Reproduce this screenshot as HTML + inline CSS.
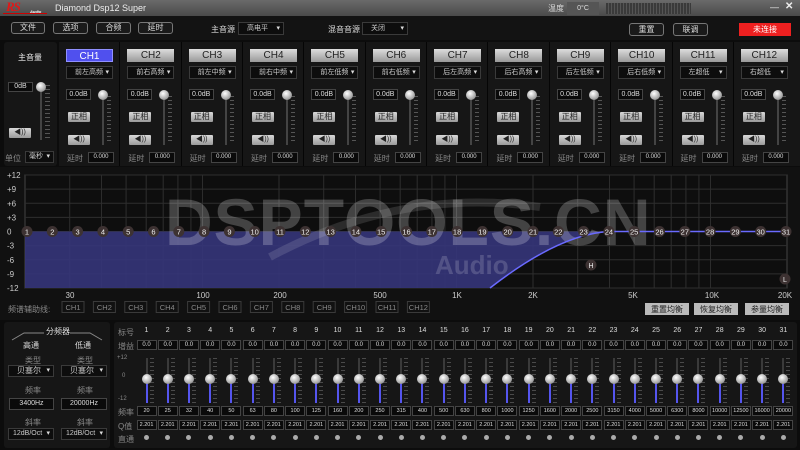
<!DOCTYPE html>
<html><head><meta charset="utf-8">
<style>
*{box-sizing:border-box;margin:0;padding:0}
body{width:800px;height:450px;overflow:hidden;background:#0c0c0c;font-family:"Liberation Sans","Noto Sans CJK SC",sans-serif;color:#ddd;position:relative;font-size:8px}
.a{position:absolute}
.btn{position:absolute;border:1px solid #777;border-radius:3px;background:#1a1a1a;color:#ddd;text-align:center;font-size:8px}
.box{position:absolute;border:1px solid #444;background:#0a0a0a;color:#ddd;text-align:center;font-size:7px}
.gbtn{position:absolute;background:linear-gradient(#d8d8d8,#9a9a9a);color:#222;text-align:center;border-radius:1px}
.sel{position:absolute;border:1px solid #3a3a3a;background:#0d0d0d;color:#ccc;font-size:7px;text-align:center}
.sel:after{content:"▾";position:absolute;right:3px;top:0;font-size:7px;color:#ddd}
.knob{position:absolute;width:10px;height:10px;border-radius:50%;background:radial-gradient(circle at 40% 35%,#fff,#aaa 60%,#666)}
.lbl{position:absolute;color:#888;font-size:8px}
</style></head><body>
<!-- title bar -->
<div class="a" style="left:0;top:0;width:800px;height:16px;background:linear-gradient(#6a6a6a,#4a4a4a)"></div>
<div class="a" style="left:6px;top:0px;color:#e01818;font:italic bold 13px 'Liberation Serif',serif;letter-spacing:-1px;line-height:13px">RS</div>
<div class="a" style="left:30px;top:9px;color:#fff;font:italic bold 4px 'Liberation Sans',sans-serif">Audio</div>
<div class="a" style="left:3px;top:13px;width:44px;height:1px;background:#c00"></div>
<div class="a" style="left:55px;top:3px;color:#eee;font-size:9px">Diamond Dsp12 Super</div>
<div class="a" style="left:548px;top:3px;color:#ddd;font-size:8px">温度</div>
<div class="a" style="left:567px;top:2px;width:32px;height:13px;background:#555;color:#ddd;font-size:7px;text-align:center;line-height:13px">0°C</div>
<div class="a" style="left:606px;top:3px;width:85px;height:11px;background:repeating-linear-gradient(90deg,#3a3a3a 0 2px,#555 2px 3px)"></div>
<div class="a" style="left:770px;top:2px;color:#eee;font-size:9px">—</div>
<div class="a" style="left:785px;top:1px;color:#eee;font-size:10px;font-weight:bold">✕</div>
<!-- menu row -->
<div class="a" style="left:0;top:16px;width:800px;height:24px;background:#131313"></div>
<div class="btn" style="left:11px;top:22px;width:34px;height:12px;line-height:10px">文件</div>
<div class="btn" style="left:53px;top:22px;width:35px;height:12px;line-height:10px">选项</div>
<div class="btn" style="left:96px;top:22px;width:35px;height:12px;line-height:10px">合频</div>
<div class="btn" style="left:138px;top:22px;width:35px;height:12px;line-height:10px">延时</div>
<div class="a" style="left:211px;top:24px;font-size:8px">主音源</div>
<div class="sel" style="left:238px;top:22px;width:46px;height:13px;line-height:11px;text-align:left;padding-left:8px">高电平</div>
<div class="a" style="left:328px;top:24px;font-size:8px">混音音源</div>
<div class="sel" style="left:362px;top:22px;width:46px;height:13px;line-height:11px;text-align:left;padding-left:8px">关闭</div>
<div class="btn" style="left:629px;top:23px;width:35px;height:13px;line-height:11px">重置</div>
<div class="btn" style="left:673px;top:23px;width:35px;height:13px;line-height:11px">联调</div>
<div class="a" style="left:739px;top:23px;width:52px;height:13px;background:#ee2020;color:#fff;text-align:center;line-height:13px;font-size:8px">未连接</div>
<!-- master -->
<div class="a" style="left:4px;top:42px;width:53px;height:124px;background:#161616;border-radius:3px"></div>
<div class="a" style="left:18px;top:52px;font-size:8px;color:#eee">主音量</div>
<div class="box" style="left:8px;top:82px;width:25px;height:10px;font-size:7px;line-height:8px">0dB</div>
<div class="a" style="left:40px;top:85px;width:2px;height:55px;background:#444"></div>
<div class="a" style="left:45px;top:85px;width:5px;height:55px;background:repeating-linear-gradient(#555 0 1px,transparent 1px 4px)"></div>
<div class="knob" style="left:36px;top:82px"></div>
<div class="gbtn" style="left:9px;top:128px;width:22px;height:10px;font-size:7px;line-height:10px">◀))</div>
<div class="lbl" style="left:5px;top:153px">单位</div>
<div class="sel" style="left:25px;top:151px;width:29px;height:12px;line-height:10px;text-align:left;padding-left:3px">毫秒</div>
<div class="a" style="left:59px;top:42px;width:741px;height:124px;background:#161616"></div>
<div id="ch"></div>
<!-- graph -->
<div class="a" style="left:0;top:167px;width:800px;height:153px;background:#111"></div>
<svg class="a" style="left:0;top:167px" width="800" height="153" id="g"></svg>
<!-- bottom -->
<div class="a" style="left:4px;top:322px;width:106px;height:126px;background:#161616;border-radius:3px"></div>
<svg class="a" style="left:4px;top:322px" width="106" height="20"><path d="M8 18 L20 11 L40 11 M66 11 L86 11 L98 18" stroke="#888" fill="none"/></svg>
<div class="a" style="left:46px;top:326px;font-size:8px;color:#ddd">分频器</div>
<div class="a" style="left:23px;top:340px;font-size:8px">高通</div>
<div class="a" style="left:75px;top:340px;font-size:8px">低通</div>
<div class="lbl" style="left:25px;top:355px">类型</div><div class="lbl" style="left:77px;top:355px">类型</div>
<div class="sel" style="left:8px;top:365px;width:46px;height:12px;line-height:10px;font-size:8px;text-align:left;padding-left:8px">贝塞尔</div>
<div class="sel" style="left:61px;top:365px;width:46px;height:12px;line-height:10px;font-size:8px;text-align:left;padding-left:8px">贝塞尔</div>
<div class="lbl" style="left:25px;top:385px">频率</div><div class="lbl" style="left:77px;top:385px">频率</div>
<div class="box" style="left:9px;top:398px;width:45px;height:12px;line-height:10px">3400Hz</div>
<div class="box" style="left:61px;top:398px;width:46px;height:12px;line-height:10px">20000Hz</div>
<div class="lbl" style="left:25px;top:417px">斜率</div><div class="lbl" style="left:77px;top:417px">斜率</div>
<div class="sel" style="left:8px;top:428px;width:46px;height:12px;line-height:10px;text-align:left;padding-left:4px">12dB/Oct</div>
<div class="sel" style="left:61px;top:428px;width:46px;height:12px;line-height:10px;text-align:left;padding-left:4px">12dB/Oct</div>
<div class="a" style="left:114px;top:322px;width:683px;height:126px;background:#161616;border-radius:3px"></div>
<div class="lbl" style="left:118px;top:327px">标号</div>
<div class="lbl" style="left:118px;top:341px">增益</div>
<div class="lbl" style="left:117px;top:355px;font-size:6px">+12</div>
<div class="lbl" style="left:122px;top:373px;font-size:6px">0</div>
<div class="lbl" style="left:118px;top:396px;font-size:6px">-12</div>
<div class="lbl" style="left:118px;top:407px">频率</div>
<div class="lbl" style="left:118px;top:421px">Q值</div>
<div class="lbl" style="left:118px;top:434px">直通</div>
<div id="bands"></div>
<script>
var h='';
var names=['前左高频','前右高频','前左中频','前右中频','前左低频','前右低频','后左高频','后右高频','后左低频','后右低频','左超低','右超低'];
for(var i=0;i<12;i++){var x=59+i*61.35;
if(i>0)h+='<div class="a" style="left:'+(x-1)+'px;top:42px;width:1px;height:124px;background:#050505"></div>';
h+='<div class="a" style="left:'+(x+7)+'px;top:49px;width:47px;height:13px;line-height:13px;text-align:center;font-size:10px;'+(i==0?'background:#5050ee;border:1px solid #9090ff;color:#fff':'background:linear-gradient(#ddd,#999);color:#222')+'">CH'+(i+1)+'</div>';
h+='<div class="sel" style="left:'+(x+7)+'px;top:66px;width:47px;height:13px;line-height:11px;text-align:left;padding-left:8px">'+names[i]+'</div>';
h+='<div class="box" style="left:'+(x+7)+'px;top:89px;width:25px;height:11px;line-height:9px">0.0dB</div>';
h+='<div class="a" style="left:'+(x+43)+'px;top:93px;width:2px;height:52px;background:#444"></div>';
h+='<div class="a" style="left:'+(x+48)+'px;top:96px;width:4px;height:48px;background:repeating-linear-gradient(#555 0 1px,transparent 1px 4px)"></div>';
h+='<div class="knob" style="left:'+(x+39)+'px;top:90px"></div>';
h+='<div class="gbtn" style="left:'+(x+9)+'px;top:112px;width:22px;height:10px;line-height:10px;font-size:8px">正相</div>';
h+='<div class="gbtn" style="left:'+(x+9)+'px;top:135px;width:22px;height:10px;line-height:10px;font-size:7px">◀))</div>';
h+='<div class="lbl" style="left:'+(x+8)+'px;top:153px">延时</div>';
h+='<div class="box" style="left:'+(x+29)+'px;top:152px;width:26px;height:11px;line-height:9px;font-size:6px">0.000</div>';}
document.getElementById('ch').innerHTML=h;
var L=25,R=787,T=175-167,B=288-167,s='';
function fx(f){return L+Math.log10(f/20)/3*(R-L);}
s+='<rect x="'+L+'" y="'+T+'" width="'+(R-L)+'" height="'+(B-T)+'" fill="#0e0e0e" stroke="#444"/>';
var fs=[30,40,50,60,70,80,90,100,200,300,400,500,600,700,800,900,1000,2000,3000,4000,5000,6000,7000,8000,9000,10000];
fs.forEach(function(f){var x=fx(f);s+='<line x1="'+x+'" y1="'+T+'" x2="'+x+'" y2="'+B+'" stroke="#2e2e2e"/>';});
var labs=['+12','+9','+6','+3','0','-3','-6','-9','-12'];
for(var k=0;k<9;k++){var y=T+k*(B-T)/8;s+='<line x1="'+L+'" y1="'+y+'" x2="'+R+'" y2="'+y+'" stroke="#2e2e2e"/><text x="7" y="'+(y+3)+'" fill="#ccc" font-size="8" font-family="Liberation Sans">'+labs[k]+'</text>';}
var y0=T+4*(B-T)/8;
s+='<path d="M25 '+y0+' L610 '+y0+' Q560 '+(y0+2)+' 490 '+B+' L25 '+B+' Z" fill="#35357a" opacity="0.9"/>';
s+='<text x="165" y="78" fill="#fff" opacity="0.22" font-size="66" font-weight="bold" font-family="Liberation Sans" letter-spacing="1">DSPTOOLS.CN</text>';
s+='<text x="435" y="107" fill="#fff" opacity="0.16" font-size="26" font-weight="bold" font-family="Liberation Sans">Audio</text>';
s+='<path d="M270 90 Q400 20 540 40" stroke="#fff" opacity="0.12" stroke-width="8" fill="none"/>';
s+='<path d="M490 '+B+' Q560 '+(y0+2)+' 610 '+y0+' L787 '+y0+'" stroke="#6a6aff" stroke-width="1.5" fill="none"/>';
for(var i=0;i<31;i++){var x=27+i*25.3;s+='<circle cx="'+x+'" cy="'+y0+'" r="5.5" fill="#3d3232"/><text x="'+x+'" y="'+(y0+3)+'" fill="#eee" font-size="7.5" text-anchor="middle" font-family="Liberation Sans">'+(i+1)+'</text>';}
s+='<circle cx="591" cy="98" r="5.5" fill="#3d3232"/><text x="591" y="101" fill="#eee" font-size="7" text-anchor="middle" font-family="Liberation Sans">H</text>';
s+='<circle cx="785" cy="112" r="5.5" fill="#3d3232"/><text x="785" y="115" fill="#eee" font-size="7" text-anchor="middle" font-family="Liberation Sans">L</text>';
[['30',70],['100',203],['200',280],['500',380],['1K',457],['2K',533],['5K',633],['10K',712],['20K',785]].forEach(function(a){s+='<text x="'+a[1]+'" y="131" fill="#ccc" font-size="8" text-anchor="middle" font-family="Liberation Sans">'+a[0]+'</text>';});
s+='<text x="8" y="145" fill="#888" font-size="8" font-family="Liberation Sans,Noto Sans CJK SC">频谱辅助线:</text>';
for(var i=0;i<12;i++){var x=62+i*31.4;s+='<rect x="'+x+'" y="134.5" width="22" height="11" fill="none" stroke="#3a3a3a"/><text x="'+(x+11)+'" y="143" fill="#888" font-size="7.5" text-anchor="middle" font-family="Liberation Sans">CH'+(i+1)+'</text>';}
[['重置均衡',645],['恢复均衡',694],['参量均衡',745]].forEach(function(a){s+='<rect x="'+a[1]+'" y="136" width="44" height="12" fill="#bbb"/><text x="'+(a[1]+22)+'" y="145" fill="#222" font-size="8" text-anchor="middle" font-family="Noto Sans CJK SC">'+a[0]+'</text>';});
document.getElementById('g').innerHTML=s;
var fr=[20,25,32,40,50,63,80,100,125,160,200,250,315,400,500,630,800,1000,1250,1600,2000,2500,3150,4000,5000,6300,8000,10000,12500,16000,20000];
var b='';
for(var i=0;i<31;i++){var c=146.5+i*21.23;
b+='<div class="a" style="left:'+(c-10)+'px;top:327px;width:20px;text-align:center;font-size:7px;color:#ddd">'+(i+1)+'</div>';
b+='<div class="box" style="left:'+(c-10)+'px;top:340px;width:20px;height:10px;line-height:8px;font-size:6px">0.0</div>';
b+='<div class="a" style="left:'+(c-1)+'px;top:358px;width:2px;height:45px;background:#3a3a3a"></div>';
b+='<div class="a" style="left:'+(c-1)+'px;top:381px;width:2px;height:22px;background:#5555ee"></div>';
b+='<div class="a" style="left:'+(c+3)+'px;top:358px;width:4px;height:45px;background:repeating-linear-gradient(#4a4a4a 0 1px,transparent 1px 4px)"></div>';
b+='<div class="knob" style="left:'+(c-5)+'px;top:374px"></div>';
b+='<div class="box" style="left:'+(c-10)+'px;top:406px;width:20px;height:10px;line-height:8px;font-size:5.5px">'+fr[i]+'</div>';
b+='<div class="box" style="left:'+(c-10)+'px;top:420px;width:20px;height:10px;line-height:8px;font-size:5.5px">2.201</div>';
b+='<div class="a" style="left:'+(c-2.5)+'px;top:435px;width:5px;height:5px;border-radius:50%;background:#aaa"></div>';}
document.getElementById('bands').innerHTML=b;
</script>
</body></html>
